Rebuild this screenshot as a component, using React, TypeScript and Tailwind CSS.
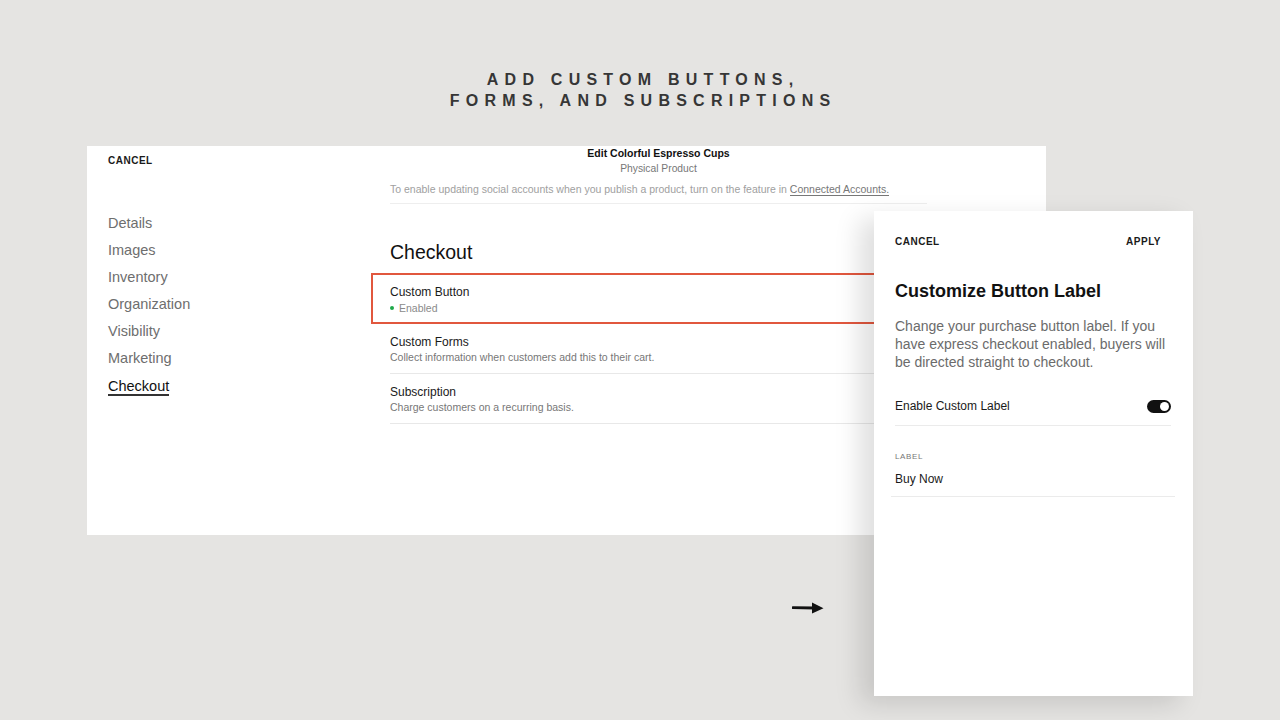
const sideItems = ['Details', 'Images', 'Inventory', 'Organization', 'Visibility', 'Marketing', 'Checkout'];

const rows = [
  { title: 'Custom Forms', desc: 'Collect information when customers add this to their cart.' },
  { title: 'Subscription', desc: 'Charge customers on a recurring basis.' },
];

function Arrow() {
  return (
    <svg width="32" height="12" viewBox="0 0 32 12" className="block">
      <path d="M1 5.6 L22 6" stroke="#111" strokeWidth="2.8" strokeLinecap="round" fill="none" />
      <path d="M20 0.5 L31.5 6.2 L20 11.5 Z" fill="#111" />
    </svg>
  );
}

function ProductEditor() {
  return (
    <div className="absolute left-[87px] top-[146px] w-[959px] h-[389px] bg-white flex">
      {/* sidebar */}
      <div className="w-[303px] pl-[21px] shrink-0">
        <div className="h-[28px] flex items-center text-[10px] font-bold tracking-[0.05em] text-[#1a1a1a]">CANCEL</div>
        <ul className="mt-[36px] flex flex-col">
          {sideItems.map(item => (
            <li key={item} className="h-[27px] flex items-center">
              {item === 'Checkout' ? (
                <span className="text-[14.5px] text-[#111] border-b-2 border-[#333] leading-[16px] pt-[2px] mt-[1px]">{item}</span>
              ) : (
                <span className="text-[14.5px] text-[#6e6e6e]">{item}</span>
              )}
            </li>
          ))}
        </ul>
      </div>

      {/* content */}
      <div className="w-[537px] shrink-0">
        <div className="pt-[1px] text-center">
          <div className="text-[10.5px] font-bold text-[#111] leading-[13px]">Edit Colorful Espresso Cups</div>
          <div className="text-[10.3px] text-[#777] leading-[14px] mt-[2px]">Physical Product</div>
        </div>
        <div className="mt-[6px] h-[22px] border-b border-[#eeeeee]">
          <div className="text-[10.5px] leading-[14px] text-[#a0a0a0] whitespace-nowrap">
            To enable updating social accounts when you publish a product, turn on the feature in{' '}
            <span className="text-[#777] border-b border-[#777]">Connected Accounts.</span>
          </div>
        </div>

        <h2 className="mt-[37px] text-[19.5px] leading-[22px] text-[#111]">Checkout</h2>

        <div className="mt-[10px] -mx-[19px] h-[51px] border-2 border-[#e1573e] pl-[17px] pt-[10px]">
          <div className="text-[12px] leading-[14px] text-[#1a1a1a]">Custom Button</div>
          <div className="mt-[1px] flex items-center gap-[5px] text-[10.5px] leading-[16px] text-[#8a8a8a]">
            <span className="w-[4px] h-[4px] rounded-full bg-[#1ea84a]" />
            Enabled
          </div>
        </div>

        {rows.map(r => (
          <div key={r.title} className="pt-[11px] pb-[8px] border-b border-[#e8e8e8]">
            <div className="text-[12px] leading-[14px] text-[#1a1a1a]">{r.title}</div>
            <div className="text-[10.5px] leading-[16px] text-[#777]">{r.desc}</div>
          </div>
        ))}
      </div>
    </div>
  );
}

function LabelPanel() {
  return (
    <div className="absolute left-[874px] top-[211px] w-[319px] h-[485px] bg-white shadow-[-14px_8px_24px_rgba(0,0,0,0.13)] pl-[21px] pr-[22px]">
      <div className="h-[60px] flex items-center justify-between pr-[10px] text-[10px] font-bold tracking-[0.05em] text-[#1a1a1a]">
        <span>CANCEL</span>
        <span>APPLY</span>
      </div>
      <h1 className="mt-[8px] text-[18px] leading-[24px] font-bold text-[#111]">Customize Button Label</h1>
      <p className="mt-[14px] text-[14px] leading-[18px] text-[#6b6b6b] whitespace-nowrap">
        Change your purchase button label. If you
        <br />
        have express checkout enabled, buyers will
        <br />
        be directed straight to checkout.
      </p>
      <div className="mt-[18px] h-[37px] flex items-center justify-between border-b border-[#ebebeb] pb-[2px]">
        <span className="text-[12px] text-[#1a1a1a]">Enable Custom Label</span>
        <span className="w-[24px] h-[13px] rounded-full bg-[#111] flex items-center justify-end pr-[2px]">
          <span className="w-[9px] h-[9px] rounded-full bg-white" />
        </span>
      </div>
      <div className="mt-[25px] text-[8px] tracking-[0.08em] text-[#777] leading-[12px]">LABEL</div>
      <div className="-mx-[4px] px-[4px] mt-[9px] pb-[10px] border-b border-[#ebebeb] text-[12px] leading-[14px] text-[#1a1a1a]">Buy Now</div>
    </div>
  );
}

export default function App() {
  return (
    <div className="relative w-[1280px] h-[720px] overflow-hidden bg-[#e5e4e2] font-['Liberation_Sans',Arial,sans-serif]">
      <div className="pt-[69px] text-center text-[16px] font-bold tracking-[0.39em] leading-[21px] text-[#363636]">
        <div className="pl-[0.39em]">ADD CUSTOM BUTTONS,</div>
        <div className="pl-[0.39em]">FORMS, AND SUBSCRIPTIONS</div>
      </div>
      <ProductEditor />
      <div className="absolute left-[792px] top-[602px]">
        <Arrow />
      </div>
      <LabelPanel />
    </div>
  );
}
